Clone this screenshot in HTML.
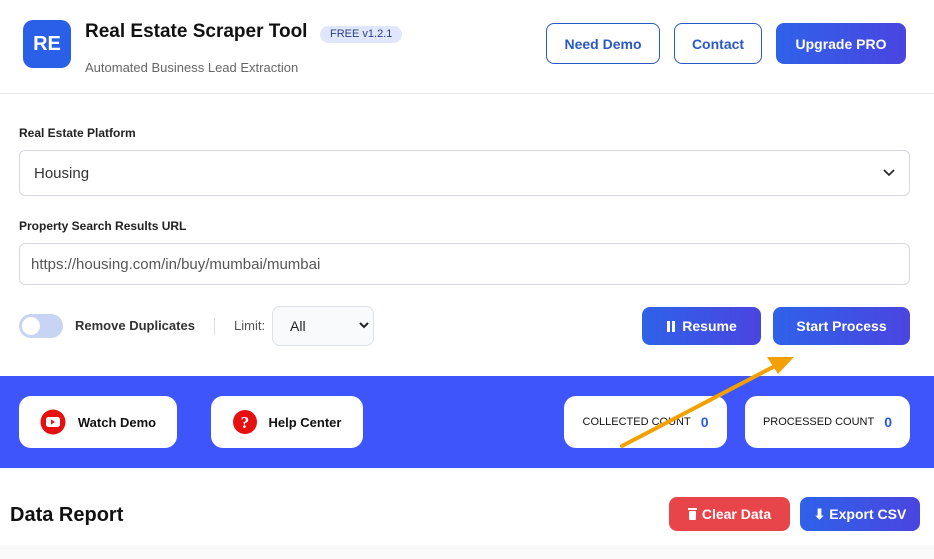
<!DOCTYPE html>
<html><head><meta charset="utf-8"><style>
*{box-sizing:border-box;margin:0;padding:0}
body{width:934px;height:559px;overflow:hidden;background:#fff;font-family:"Liberation Sans",sans-serif;position:relative;color:#111}
.abs{position:absolute}
.logo{left:23px;top:20px;width:48px;height:48px;border-radius:10px;background:#2a5fe8;color:#fff;font-weight:bold;font-size:20px;display:flex;align-items:center;justify-content:center}
.btn-o{top:23px;height:41px;border:1px solid #2b59c3;border-radius:8px;color:#2b59c3;font-size:14px;font-weight:bold;display:flex;align-items:center;justify-content:center;background:#fff}
.grad{background:linear-gradient(90deg,#2f62e8,#4a45e0);color:#fff;font-weight:bold;border-radius:8px;display:flex;align-items:center;justify-content:center;font-size:14px}
.lbl{font-size:12px;font-weight:bold;color:#222}
.inp{left:19px;width:891px;border:1px solid #d6d9de;border-radius:6px;font-size:15px;color:#333;display:flex;align-items:center;padding-left:14px}
.card{top:396px;height:52px;background:#fff;border-radius:12px;display:flex;align-items:center;justify-content:center;font-size:13px;font-weight:bold;color:#111}
.cnt{font-size:11px;color:#111}
.cnt b{color:#2b59e0;font-size:14px;margin-left:10px}
</style></head><body>
<div class="abs logo">RE</div>
<div class="abs" style="left:85px;top:21px;font-size:19px;font-weight:bold;color:#111;white-space:nowrap">Real Estate Scraper Tool</div>
<div class="abs" style="left:320px;top:26px;height:17px;padding:0 10px;border-radius:9px;background:#e0e6fb;color:#2c3e80;font-size:11px;line-height:17px">FREE v1.2.1</div>
<div class="abs" style="left:85px;top:60px;font-size:13px;color:#666">Automated Business Lead Extraction</div>
<div class="abs btn-o" style="left:546px;width:114px">Need Demo</div>
<div class="abs btn-o" style="left:674px;width:88px">Contact</div>
<div class="abs grad" style="left:776px;top:23px;width:130px;height:41px">Upgrade PRO</div>
<div class="abs" style="left:0;top:93px;width:934px;height:1px;background:#e5e7eb"></div>

<div class="abs lbl" style="left:19px;top:126px">Real Estate Platform</div>
<div class="abs inp" style="top:150px;height:46px">Housing</div>
<svg class="abs" style="left:882px;top:167px" width="14" height="12"><path d="M2 3l5 5 5-5" stroke="#222" stroke-width="1.6" fill="none"/></svg>
<div class="abs lbl" style="left:19px;top:219px">Property Search Results URL</div>
<div class="abs inp" style="top:243px;height:42px;padding-left:11px;color:#555">https://housing.com/in/buy/mumbai/mumbai</div>

<div class="abs" style="left:19px;top:314px;width:44px;height:24px;border-radius:12px;background:#c8d4f4"></div>
<div class="abs" style="left:22px;top:317px;width:18px;height:18px;border-radius:9px;background:#fff"></div>
<div class="abs" style="left:75px;top:318px;font-size:13px;font-weight:bold;color:#333">Remove Duplicates</div>
<div class="abs" style="left:214px;top:318px;width:1px;height:17px;background:#ddd"></div>
<div class="abs" style="left:234px;top:318px;font-size:13px;color:#555">Limit:</div>
<div class="abs" style="left:272px;top:306px;width:102px;height:40px;border:1px solid #dde2e8;border-radius:8px;background:#f8fafc;font-size:14px;padding:11px 0 0 17px;color:#222">All</div>
<svg class="abs" style="left:359px;top:321px" width="10" height="9"><path d="M1 2l4 4 4-4" stroke="#222" stroke-width="2" fill="none"/></svg>
<div class="abs grad" style="left:642px;top:307px;width:119px;height:38px"><svg width="10" height="11" style="margin-right:6px"><rect x="1" y="0" width="3" height="11" fill="#fff"/><rect x="6" y="0" width="3" height="11" fill="#fff"/></svg>Resume</div>
<div class="abs grad" style="left:773px;top:307px;width:137px;height:38px">Start Process</div>

<div class="abs" style="left:0;top:376px;width:934px;height:92px;background:#3d55fb"></div>
<div class="abs card" style="left:19px;width:158px"><svg width="26" height="26" style="margin-right:12px"><circle cx="13" cy="13" r="12.5" fill="#e61010"/><rect x="6" y="8" width="14" height="10" rx="2.5" fill="#fff"/><path d="M11 10.5v5l4-2.5z" fill="#e61010"/></svg>Watch Demo</div>
<div class="abs card" style="left:211px;width:152px"><svg width="24" height="24" style="margin-right:12px"><circle cx="12" cy="12" r="12" fill="#e61010"/><text x="12" y="18" text-anchor="middle" fill="#fff" font-size="17" font-weight="bold" font-family="Liberation Serif">?</text></svg>Help Center</div>
<div class="abs card cnt" style="left:564px;width:163px;font-weight:normal">COLLECTED COUNT<b>0</b></div>
<div class="abs card cnt" style="left:745px;width:165px;font-weight:normal">PROCESSED COUNT<b>0</b></div>
<svg class="abs" style="left:0;top:0" width="934" height="559"><path d="M622 446L775 366" stroke="#f3a100" stroke-width="4" stroke-linecap="round"/><path d="M794 357L767 357L778 374Z" fill="#f3a100"/></svg>

<div class="abs" style="left:10px;top:504px;font-size:20px;font-weight:bold;color:#111">Data Report</div>
<div class="abs" style="left:0;top:545px;width:934px;height:14px;background:#fafafa"></div>
<div class="abs" style="left:669px;top:497px;width:121px;height:34px;border-radius:8px;background:#e8454b;color:#fff;font-weight:bold;font-size:14px;display:flex;align-items:center;justify-content:center"><svg width="9" height="12" style="margin-right:5px"><rect x="0" y="0" width="9" height="2" fill="#fff"/><rect x="1" y="3" width="7" height="9" rx="1" fill="#fff"/></svg>Clear Data</div>
<div class="abs grad" style="left:800px;top:497px;width:120px;height:34px">⬇ Export CSV</div>
</body></html>
